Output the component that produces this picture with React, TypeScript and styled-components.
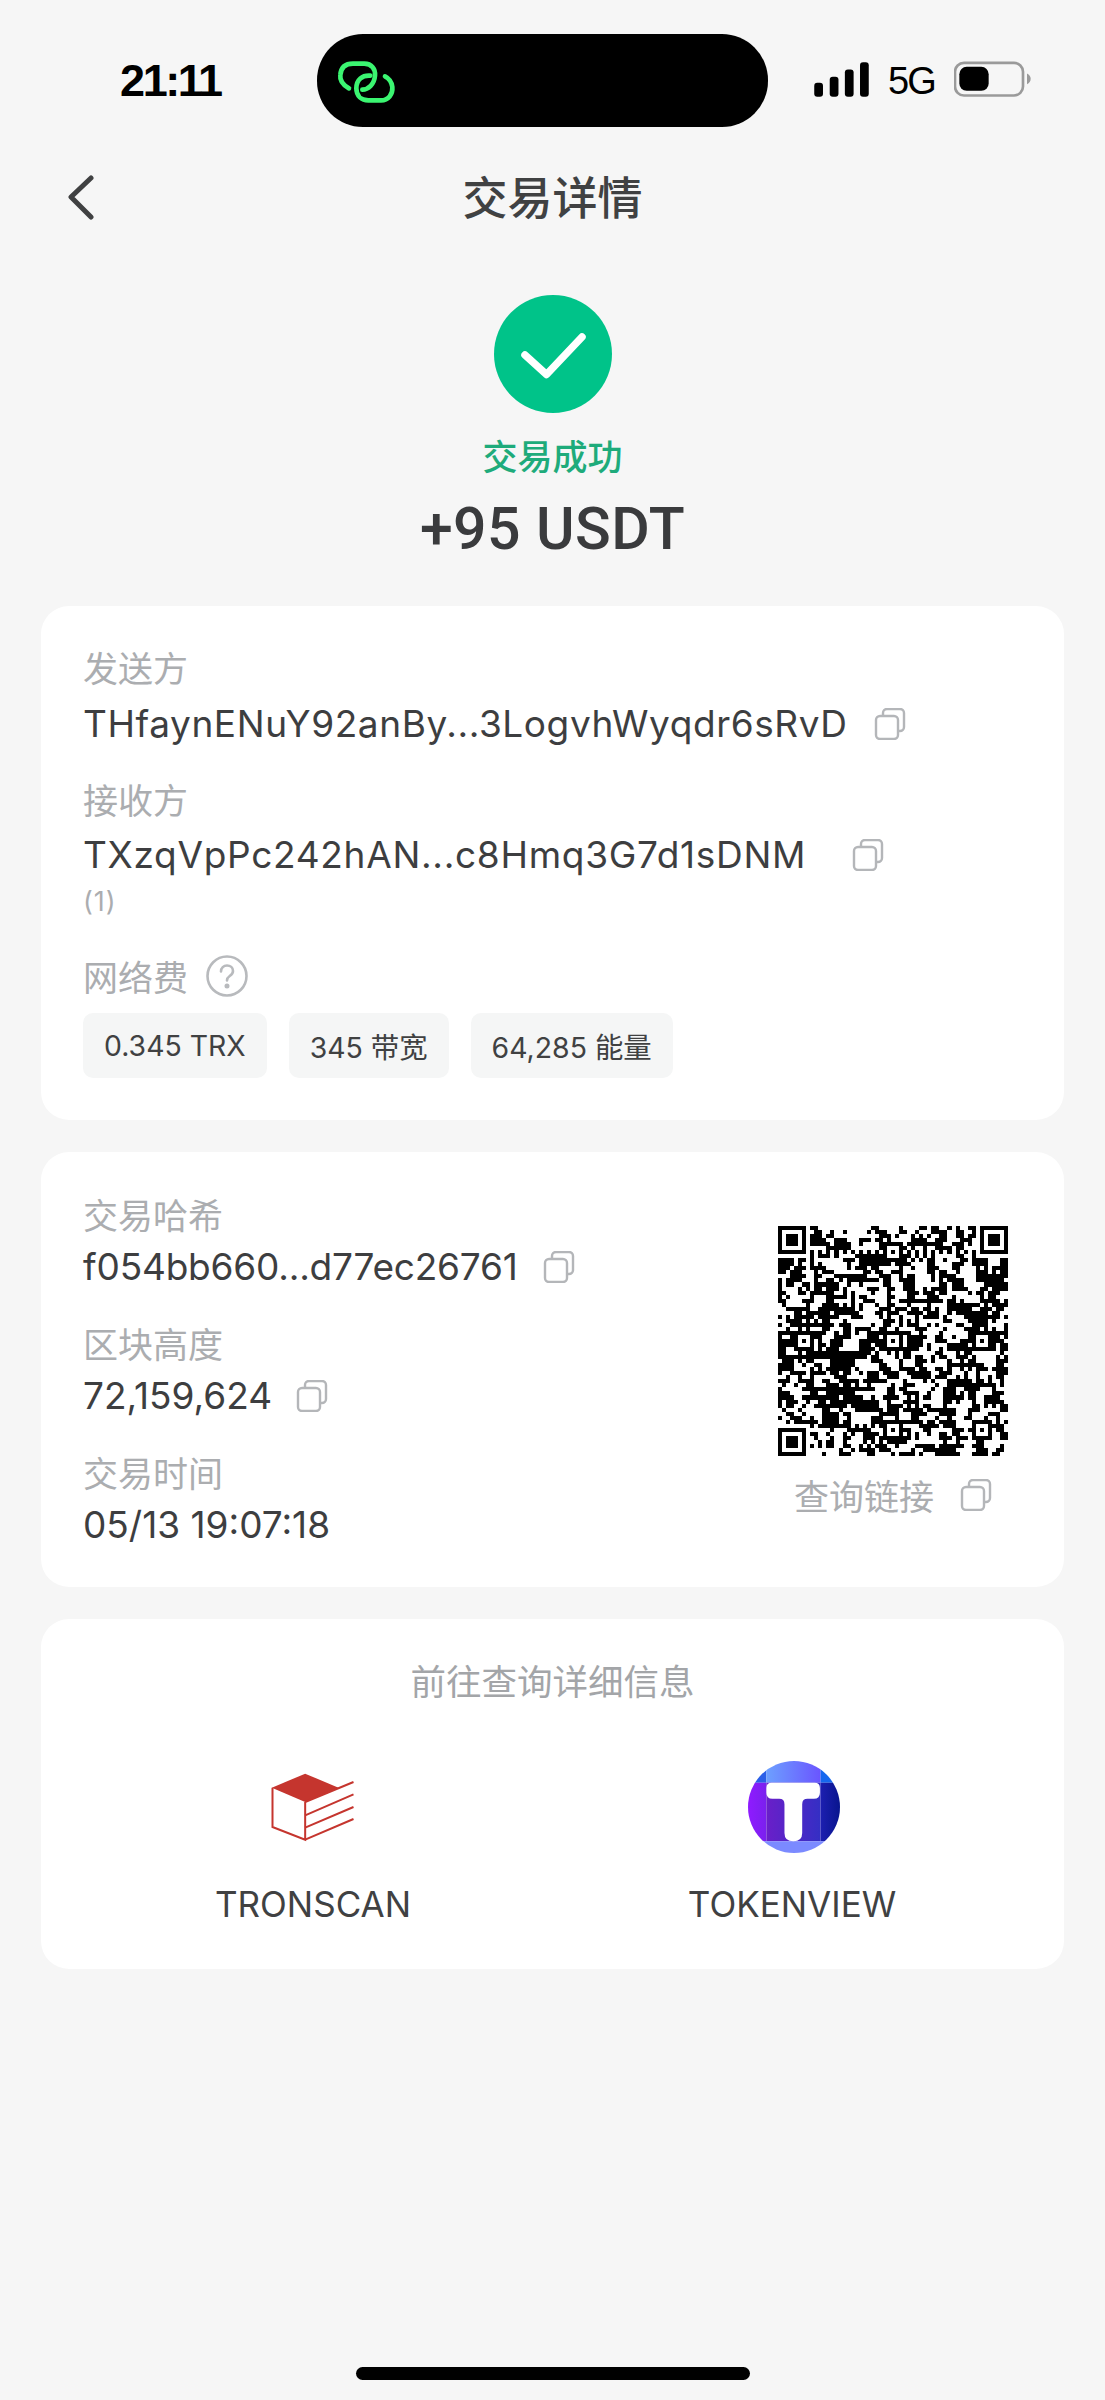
import React from "react";
import styled, { createGlobalStyle } from "styled-components";

const GlobalStyle = createGlobalStyle`
  html, body { margin: 0; padding: 0; background: #f6f6f6; }
  * { box-sizing: border-box; }
`;

const SANS = `Inter, "Noto Sans CJK SC", sans-serif`;
const CJK = `"Noto Sans CJK SC", Inter, sans-serif`;

const Page = styled.div`
  width: 1105px;
  min-height: 2400px;
  background: #f6f6f6;
  display: flex;
  flex-direction: column;
  font-family: ${SANS};
`;

const StatusBar = styled.div`
  display: grid;
  grid-template-columns: 317px 451px 1fr;
  align-items: center;
  padding-top: 34px;
`;
const Time = styled.div`
  padding-left: 120px;
  font-family: "Liberation Sans", sans-serif;
  font-weight: 700;
  font-size: 45px;
  line-height: 93px;
  letter-spacing: -2.4px;
  color: #000;
`;
const Island = styled.div`
  height: 93px;
  border-radius: 46px;
  background: #000;
  display: flex;
  align-items: center;
  padding-left: 8px;
`;
const StatusRight = styled.div`
  display: flex;
  align-items: center;
  padding-left: 46px;
  margin-top: -3px;
`;
const NetworkLabel = styled.span`
  font-family: "Liberation Sans", sans-serif;
  font-size: 38px;
  line-height: 44px;
  letter-spacing: -2px;
  color: #000;
  margin: 4px 19px 0 19px;
`;

const Nav = styled.div`
  height: 140px;
  display: grid;
  grid-template-columns: 1fr auto 1fr;
  align-items: center;
  padding: 0 66px;
`;
const NavTitle = styled.h1`
  margin: -3px 0 0;
  font-family: ${CJK};
  font-weight: 500;
  font-size: 45px;
  line-height: 60px;
  color: #404142;
`;

const Hero = styled.div`
  display: flex;
  flex-direction: column;
  align-items: center;
  padding-top: 28px;
  margin-bottom: 38px;
`;
const SuccessText = styled.div`
  margin-top: 20px;
  font-family: ${CJK};
  font-weight: 500;
  font-size: 35px;
  line-height: 44px;
  color: #1eab7b;
`;
const Amount = styled.div`
  margin-top: 12px;
  height: 79px;
  font-family: Roboto, sans-serif;
  font-weight: 500;
  font-size: 59px;
  line-height: 80px;
  letter-spacing: 0.4px;
  color: #3a3b3d;
`;

const Cards = styled.div`
  display: flex;
  flex-direction: column;
  gap: 32px;
  padding: 0 41px;
`;
const Card = styled.section`
  background: #fff;
  border-radius: 28px;
`;
const PartiesCard = styled(Card)`
  padding: 39px 42px 42px;
`;
const HashCard = styled(Card)`
  padding: 40px 56px 40px 42px;
  display: flex;
  justify-content: space-between;
`;
const LinksCard = styled(Card)`
  padding: 39px 0 43px;
`;

const Label = styled.div<{ $mt?: number }>`
  margin-top: ${(p) => p.$mt ?? 0}px;
  display: flex;
  align-items: center;
  gap: 18px;
  font-family: ${CJK};
  font-size: 35px;
  line-height: 44px;
  color: #abadb0;
`;
const ValueRow = styled.div<{ $mt: number; $gap: number }>`
  margin-top: ${(p) => p.$mt}px;
  display: flex;
  align-items: center;
  gap: ${(p) => p.$gap}px;
`;
const Value = styled.span<{ $tracking?: number }>`
  font-size: 37px;
  line-height: 44px;
  letter-spacing: ${(p) => p.$tracking ?? 0}px;
  color: #3d3e40;
`;
const Note = styled.div`
  margin-top: 10px;
  font-size: 27px;
  line-height: 30px;
  letter-spacing: 1px;
  color: #abadb0;
`;
const Chips = styled.div`
  margin-top: 15px;
  display: flex;
  gap: 22px;
`;
const Chip = styled.span`
  height: 65px;
  padding: 0 21px;
  display: flex;
  align-items: center;
  border-radius: 10px;
  background: #f5f6f6;
  font-size: 28.4px;
  white-space: pre;
  color: #404142;
`;

const QrColumn = styled.div`
  margin-top: 34px;
  display: flex;
  flex-direction: column;
  align-items: center;
`;
const QrCaption = styled.div`
  margin-top: 17px;
  display: flex;
  align-items: center;
  gap: 26px;
  font-family: ${CJK};
  font-size: 35px;
  line-height: 44px;
  color: #abadb0;
`;

const LinksTitle = styled.div`
  text-align: center;
  font-family: ${CJK};
  font-size: 35.5px;
  line-height: 44px;
  color: #a3a5a8;
`;
const Explorers = styled.div`
  margin-top: 59px;
  display: flex;
  padding-left: 152px;
  gap: 239px;
`;
const Explorer = styled.div`
  width: 240px;
  display: flex;
  flex-direction: column;
  align-items: center;
`;
const ExplorerIcon = styled.div<{ $nudge?: number }>`
  height: 91px;
  display: flex;
  align-items: center;
  justify-content: center;
  padding-left: ${(p) => p.$nudge ?? 0}px;
`;
const ExplorerName = styled.div`
  margin-top: 30px;
  font-size: 35px;
  line-height: 44px;
  color: #404142;
`;

const HomeBar = styled.div`
  width: 394px;
  height: 13px;
  margin: auto auto 20px;
  border-radius: 7px;
  background: #000;
`;

const CopyIcon = () => (
  <svg width="32" height="32" viewBox="0 0 32 32" fill="none" stroke="#b4b6b9" strokeWidth="2.4">
    <rect x="2" y="8" width="22" height="23" rx="4" />
    <path d="M9 8V5a4 4 0 0 1 4-4h13a4 4 0 0 1 4 4v14a4 4 0 0 1-4 4h-2" />
  </svg>
);

const LinkLogo = () => (
  <svg width="80" height="60" viewBox="0 0 240 180" fill="none" stroke="#3bf571" strokeWidth="14" strokeLinecap="round">
    <path d="M72 112C50 100 44 88 46 72C48 48 62 38 84 38H118C140 38 152 54 150 74C148 100 130 116 112 116" />
    <path d="M136 74C112 72 94 86 94 112C94 136 110 148 130 148H168C190 148 204 130 202 108C200 92 192 82 180 76" />
  </svg>
);

const Signal = () => (
  <svg width="55" height="35" viewBox="42 36 162 104" fill="#000">
    <rect x="42" y="98" width="26" height="41" rx="9" />
    <rect x="88" y="80" width="26" height="59" rx="9" />
    <rect x="133" y="58" width="26" height="81" rx="9" />
    <rect x="178" y="37" width="26" height="102" rx="9" />
  </svg>
);

const Battery = () => (
  <svg width="77" height="36" viewBox="465 33 231 107">
    <rect x="468" y="38" width="204" height="98" rx="27" fill="none" stroke="#9a9a9a" strokeWidth="8" />
    <rect x="481" y="50" width="88" height="72" rx="22" fill="#000" />
    <path d="M684 70c7 3 11 9 11 16s-4 13-11 16z" fill="#9a9a9a" />
  </svg>
);

const BackIcon = () => (
  <svg width="30" height="46" viewBox="0 0 30 46" fill="none" stroke="#404142" strokeWidth="5" strokeLinecap="round" strokeLinejoin="round">
    <path d="M25 4L5 23L25 43" />
  </svg>
);

const SuccessBadge = () => (
  <svg width="118" height="118" viewBox="0 0 118 118">
    <circle cx="59" cy="59" r="59" fill="#00c389" />
    <path d="M31 60L52.5 79.5L88 42" fill="none" stroke="#fff" strokeWidth="7.5" strokeLinecap="round" strokeLinejoin="round" />
  </svg>
);

const HelpIcon = () => (
  <svg width="42" height="42" viewBox="0 0 42 42" fill="none" stroke="#b8babd" strokeWidth="2.6" strokeLinecap="round">
    <circle cx="21" cy="21" r="19.5" />
    <path d="M15 16.5c0-3.6 2.7-6 6-6s6 2.3 6 5.5c0 2.5-1.6 3.8-3.3 5-1.7 1.2-2.7 2.2-2.7 4.5" />
    <circle cx="21" cy="31" r="1.2" fill="#b8babd" />
  </svg>
);

const QR_SIZE = 57;
const buildQr = () => {
  const grid: boolean[][] = Array.from({ length: QR_SIZE }, () => Array(QR_SIZE).fill(false));
  const reserved: boolean[][] = Array.from({ length: QR_SIZE }, () => Array(QR_SIZE).fill(false));
  const finder = (r0: number, c0: number) => {
    for (let r = -1; r <= 7; r++)
      for (let c = -1; c <= 7; c++) {
        const y = r0 + r;
        const x = c0 + c;
        if (y < 0 || x < 0 || y >= QR_SIZE || x >= QR_SIZE) continue;
        reserved[y][x] = true;
        const ring = r === 0 || r === 6 || c === 0 || c === 6;
        const core = r >= 2 && r <= 4 && c >= 2 && c <= 4;
        grid[y][x] = r >= 0 && r <= 6 && c >= 0 && c <= 6 && (ring || core);
      }
  };
  finder(0, 0);
  finder(0, 50);
  finder(50, 0);
  const centers = [6, 28, 50];
  centers.forEach((cy) =>
    centers.forEach((cx) => {
      if ((cy === 6 && cx === 6) || (cy === 6 && cx === 50) || (cy === 50 && cx === 6)) return;
      for (let r = -2; r <= 2; r++)
        for (let c = -2; c <= 2; c++) {
          reserved[cy + r][cx + c] = true;
          grid[cy + r][cx + c] = Math.max(Math.abs(r), Math.abs(c)) !== 1;
        }
    })
  );
  for (let i = 8; i < 49; i++) {
    if (!reserved[6][i]) { reserved[6][i] = true; grid[6][i] = i % 2 === 0; }
    if (!reserved[i][6]) { reserved[i][6] = true; grid[i][6] = i % 2 === 0; }
  }
  let seed = 94821;
  const rnd = () => {
    seed = (seed * 1103515245 + 12345) & 0x7fffffff;
    return (seed >> 12) / 0x7ffff;
  };
  for (let y = 0; y < QR_SIZE; y++)
    for (let x = 0; x < QR_SIZE; x++) {
      if (reserved[y][x]) continue;
      const left = x > 0 && grid[y][x - 1];
      const up = y > 0 && grid[y - 1][x];
      const votes = (left ? 1 : 0) + (up ? 1 : 0);
      grid[y][x] = rnd() < [0.3, 0.55, 0.72][votes];
    }
  let d = "";
  grid.forEach((row, y) => row.forEach((on, x) => { if (on) d += `M${x} ${y}h1v1h-1z`; }));
  return d;
};
const qrPath = buildQr();

const QrCode = () => (
  <svg width="230" height="230" viewBox={`0 0 ${QR_SIZE} ${QR_SIZE}`} shapeRendering="crispEdges">
    <path d={qrPath} fill="#000" />
  </svg>
);

const TronLogo = () => (
  <svg width="87" height="70" viewBox="150 125 260 210" fill="none" stroke="#c5352e" strokeWidth="6">
    <path d="M155 172L255 130L355 172L255 215Z" fill="#c5352e" stroke="none" />
    <path d="M157 172V290L255 328V215" />
    <path d="M255 215L400 155M255 255L400 192M255 292L400 230M255 328L400 266" />
  </svg>
);

const TokenLogo = () => (
  <svg width="92" height="92" viewBox="0 0 275 275">
    <defs>
      <clipPath id="tk"><circle cx="137.5" cy="137.5" r="137.5" /></clipPath>
      <linearGradient id="tkTop" x1="0" x2="1" y1="0" y2="0">
        <stop offset="0" stopColor="#6da0ff" />
        <stop offset="1" stopColor="#6a55ff" />
      </linearGradient>
      <linearGradient id="tkLeft" x1="0" x2="1" y1="0" y2="0">
        <stop offset="0" stopColor="#8f1bff" />
        <stop offset="1" stopColor="#7a20ee" />
      </linearGradient>
      <linearGradient id="tkMid" x1="0" x2="1" y1="0" y2="0">
        <stop offset="0" stopColor="#6a1fc9" />
        <stop offset="1" stopColor="#342fc4" />
      </linearGradient>
      <linearGradient id="tkRight" x1="0" x2="1" y1="0" y2="0">
        <stop offset="0" stopColor="#1d1fb0" />
        <stop offset="1" stopColor="#08158e" />
      </linearGradient>
    </defs>
    <g clipPath="url(#tk)">
      <rect x="0" y="0" width="55" height="65" fill="#2a5fe8" />
      <rect x="55" y="0" width="162" height="65" fill="url(#tkTop)" />
      <rect x="217" y="0" width="58" height="65" fill="#1668ee" />
      <rect x="0" y="65" width="55" height="175" fill="url(#tkLeft)" />
      <rect x="55" y="65" width="162" height="175" fill="url(#tkMid)" />
      <rect x="217" y="65" width="58" height="175" fill="url(#tkRight)" />
      <rect x="0" y="240" width="275" height="35" fill="#7b8aff" />
    </g>
    <path d="M71 65H199Q215 65 215 81V95Q215 113 197 113H178Q162 113 162 129V215Q162 240 135.5 240Q109 240 109 215V129Q109 113 93 113H73Q55 113 55 95V81Q55 65 71 65Z" fill="#fff" />
  </svg>
);

export default function App() {
  return (
    <Page>
      <GlobalStyle />
      <StatusBar>
        <Time>21:11</Time>
        <Island><LinkLogo /></Island>
        <StatusRight>
          <Signal />
          <NetworkLabel>5G</NetworkLabel>
          <Battery />
        </StatusRight>
      </StatusBar>

      <Nav>
        <BackIcon />
        <NavTitle>交易详情</NavTitle>
      </Nav>

      <Hero>
        <SuccessBadge />
        <SuccessText>交易成功</SuccessText>
        <Amount>+95 USDT</Amount>
      </Hero>

      <Cards>
        <PartiesCard>
          <Label>发送方</Label>
          <ValueRow $mt={13} $gap={26}>
            <Value $tracking={0.58}>THfaynENuY92anBy...3LogvhWyqdr6sRvD</Value>
            <CopyIcon />
          </ValueRow>
          <Label $mt={31}>接收方</Label>
          <ValueRow $mt={12} $gap={46}>
            <Value $tracking={0.7}>TXzqVpPc242hAN...c8Hmq3G7d1sDNM</Value>
            <CopyIcon />
          </ValueRow>
          <Note>(1)</Note>
          <Label $mt={37}>网络费<HelpIcon /></Label>
          <Chips>
            <Chip>0.345 TRX</Chip>
            <Chip>345 带宽</Chip>
            <Chip>64,285 能量</Chip>
          </Chips>
        </PartiesCard>

        <HashCard>
          <div>
            <Label>交易哈希</Label>
            <ValueRow $mt={9} $gap={25}>
              <Value $tracking={-0.2}>f054bb660...d77ec26761</Value>
              <CopyIcon />
            </ValueRow>
            <Label $mt={32}>区块高度</Label>
            <ValueRow $mt={9} $gap={24}>
              <Value>72,159,624</Value>
              <CopyIcon />
            </ValueRow>
            <Label $mt={32}>交易时间</Label>
            <ValueRow $mt={9} $gap={0}>
              <Value>05/13 19:07:18</Value>
            </ValueRow>
          </div>
          <QrColumn>
            <QrCode />
            <QrCaption>查询链接<CopyIcon /></QrCaption>
          </QrColumn>
        </HashCard>

        <LinksCard>
          <LinksTitle>前往查询详细信息</LinksTitle>
          <Explorers>
            <Explorer>
              <ExplorerIcon><TronLogo /></ExplorerIcon>
              <ExplorerName>TRONSCAN</ExplorerName>
            </Explorer>
            <Explorer>
              <ExplorerIcon $nudge={3}><TokenLogo /></ExplorerIcon>
              <ExplorerName>TOKENVIEW</ExplorerName>
            </Explorer>
          </Explorers>
        </LinksCard>
      </Cards>

      <HomeBar />
    </Page>
  );
}
